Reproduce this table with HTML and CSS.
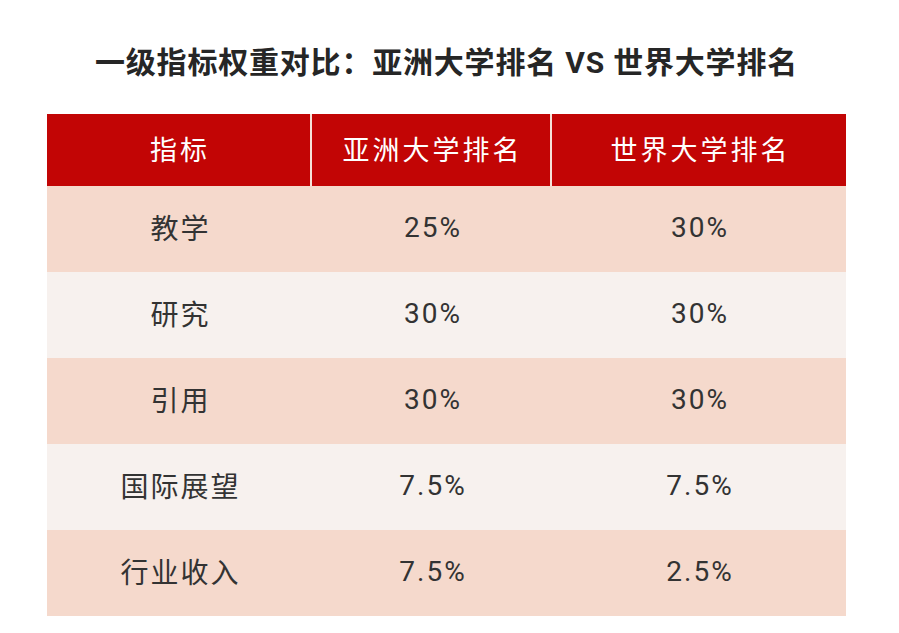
FILE: index.html
```html
<!DOCTYPE html>
<html lang="zh-CN">
<head>
<meta charset="utf-8">
<link rel="stylesheet" href="styles.css">
</head>
<body>
<div class="wrap">
  <h1 class="title">一级指标权重对比：亚洲大学排名 VS 世界大学排名</h1>
  <div class="table">
    <div class="row head">
      <div class="cell">指标</div>
      <div class="cell">亚洲大学排名</div>
      <div class="cell">世界大学排名</div>
    </div>
    <div class="row odd">
      <div class="cell">教学</div>
      <div class="cell">25%</div>
      <div class="cell">30%</div>
    </div>
    <div class="row even">
      <div class="cell">研究</div>
      <div class="cell">30%</div>
      <div class="cell">30%</div>
    </div>
    <div class="row odd">
      <div class="cell">引用</div>
      <div class="cell">30%</div>
      <div class="cell">30%</div>
    </div>
    <div class="row even">
      <div class="cell">国际展望</div>
      <div class="cell">7.5%</div>
      <div class="cell">7.5%</div>
    </div>
    <div class="row odd">
      <div class="cell">行业收入</div>
      <div class="cell">7.5%</div>
      <div class="cell">2.5%</div>
    </div>
  </div>
</div>
</body>
</html>
```

FILE: styles.css
```css
html, body {
  margin: 0;
  padding: 0;
  background: #ffffff;
}
body {
  font-family: Roboto, "Noto Sans CJK SC", sans-serif;
  color: #333333;
}
.wrap {
  width: 799px;
  margin-left: 47px;
  padding-top: 43px;
}
.title {
  margin: 0;
  font-size: 30px;
  line-height: 40px;
  font-weight: 700;
  letter-spacing: 0.8px;
  text-align: center;
  color: #262626;
}
.table {
  margin-top: 31px;
}
.row {
  display: grid;
  grid-template-columns: 265px 240px 294px;
}
.cell {
  box-sizing: border-box;
  display: flex;
  align-items: center;
  justify-content: center;
  padding-bottom: 4px;
  font-size: 28px;
  letter-spacing: 2px;
  text-indent: 2px;
}
.head {
  height: 72px;
  background: #c20505;
}
.head .cell {
  color: #ffffff;
  font-size: 27px;
  letter-spacing: 3px;
  text-indent: 3px;
}
.head .cell:not(:last-child) {
  border-right: 2px solid #f6e1d8;
}
.odd, .even {
  height: 86px;
}
.odd {
  background: #f5d9cc;
}
.even {
  background: #f7f1ee;
}
```
